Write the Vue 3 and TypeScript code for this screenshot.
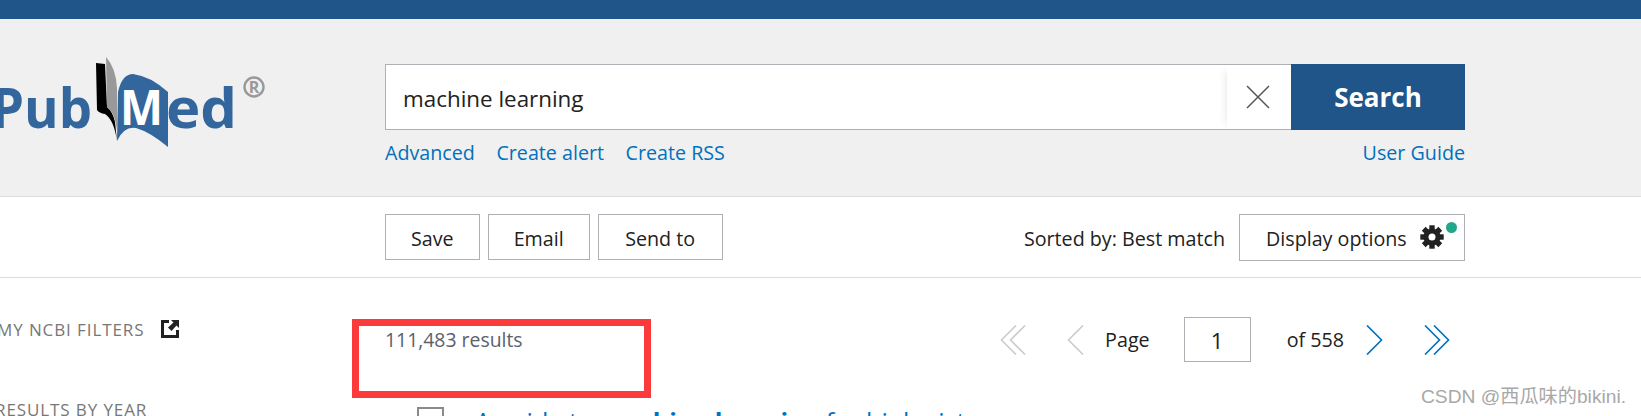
<script setup lang="ts">
const actions: string[] = ['Save', 'Email', 'Send to']
const links: string[] = ['Advanced', 'Create alert', 'Create RSS']
</script>

<template>
  <div class="page">
    <div class="topbar"></div>
    <header class="header">
      <svg class="logo" width="385" height="176" viewBox="0 19 385 176">
        <text class="logo-word" x="-9" y="128" textLength="101" lengthAdjust="spacingAndGlyphs">Pub</text>
        <path fill="#000" d="M96 63 L105 64 L107 107 Q113 112 115 122 L117 141 Q114 120 105 114 Q99 113 97 110 Z" />
        <path fill="#999" d="M106 57 Q116 68 117 88 L117 130 Q115 113 107 107 Z" />
        <path fill="#33669c" d="M118 92 Q122 74 133 74 Q150 76 168 92 L168 147 Q150 132 136 128 Q124 126 117 141 Z" />
        <text class="logo-m" x="120" y="125" textLength="43" lengthAdjust="spacingAndGlyphs">M</text>
        <text class="logo-word" x="166" y="128" textLength="71" lengthAdjust="spacingAndGlyphs">ed</text>
        <circle cx="254" cy="87" r="9.5" fill="none" stroke="#999" stroke-width="2.4" />
        <text class="logo-r" x="254" y="93">R</text>
      </svg>
      <div class="search-col">
        <div class="search-row">
          <div class="search-input">
            <span class="query">machine learning</span>
            <span class="clear">
              <svg width="24" height="24" viewBox="0 0 24 24">
                <path d="M1 1 L23 23 M23 1 L1 23" stroke="#555" stroke-width="1.5" fill="none" />
              </svg>
            </span>
          </div>
          <div class="search-btn">Search</div>
        </div>
        <div class="search-links">
          <a v-for="link in links" :key="link" class="link">{{ link }}</a>
          <a class="link guide">User Guide</a>
        </div>
      </div>
    </header>

    <section class="toolbar">
      <div class="actions">
        <div v-for="action in actions" :key="action" class="btn">{{ action }}</div>
      </div>
      <div class="sort">
        <span>Sorted by: Best match</span>
        <div class="display">
          <span>Display options</span>
          <svg width="24" height="24" viewBox="0 0 24 24">
            <g fill="#212121">
              <circle cx="12" cy="12" r="8.6" />
              <rect v-for="a in [0, 45, 90, 135]" :key="a" x="9.3" y="0.3" width="5.4" height="23.4" :transform="`rotate(${a} 12 12)`" />
              <circle cx="12" cy="12" r="3.5" fill="#fff" />
            </g>
          </svg>
          <i class="dot"></i>
        </div>
      </div>
    </section>

    <section class="content">
      <aside class="sidebar">
        <div class="side-title filters">
          <span>MY NCBI FILTERS</span>
          <svg width="18" height="18" viewBox="0 0 18 18">
            <path fill="#212121" d="M0 0 H8 V3 H3 V15 H15 V10 H18 V18 H0 Z" />
            <path fill="#212121" d="M10 0 H18 V8 L15.5 5.5 L10.5 11 L7 7.5 L12.5 2.5 Z" />
          </svg>
        </div>
        <div class="side-title year">RESULTS BY YEAR</div>
      </aside>
      <div class="main">
        <div class="result-bar">
          <span class="count">111,483 results</span>
          <nav class="pager">
            <svg class="first" width="26" height="30" viewBox="0 0 26 30">
              <path d="M16 .5 L1.5 15 L16 29.5 M25 .5 L10.5 15 L25 29.5" stroke="#ccc" stroke-width="1.6" fill="none" />
            </svg>
            <svg class="prev" width="17" height="30" viewBox="0 0 17 30">
              <path d="M16 .5 L1.5 15 L16 29.5" stroke="#ccc" stroke-width="1.6" fill="none" />
            </svg>
            <span class="page-label">Page</span>
            <div class="page-box">1</div>
            <span class="page-of">of 558</span>
            <svg class="next" width="17" height="30" viewBox="0 0 17 30">
              <path d="M1 .5 L15.5 15 L1 29.5" stroke="#0071bc" stroke-width="1.6" fill="none" />
            </svg>
            <svg class="last" width="26" height="30" viewBox="0 0 26 30">
              <path d="M1 .5 L15.5 15 L1 29.5 M10 .5 L24.5 15 L10 29.5" stroke="#0071bc" stroke-width="1.6" fill="none" />
            </svg>
          </nav>
        </div>
        <article class="article">
          <span class="check"></span>
          <a class="title">A guide to <b>machine learning</b> for biologists</a>
        </article>
      </div>
    </section>

    <div class="highlight"></div>
    <div class="watermark">CSDN @西瓜味的bikini.</div>
  </div>
</template>

<style>
html, body { margin: 0; overflow: hidden; background: #fff; }
</style>

<style scoped>
.page {
  position: relative;
  height: 416px;
  overflow: hidden;
  font-family: "Open Sans", "Noto Sans", sans-serif;
  font-size: 19.7px;
  color: #212121;
  background: #fff;
}
.topbar { height: 19px; background: #20558a; }
.header {
  height: 178px;
  box-sizing: border-box;
  display: flex;
  background: #f0f0f0;
  border-bottom: 1px solid #dcdcdc;
  padding-right: 176px;
}
.logo { flex: none; display: block; }
.logo-word { font: 700 56px "Open Sans", sans-serif; fill: #33669c; }
.logo-m { font: 700 48px "Open Sans", sans-serif; fill: #fff; }
.logo-r { font: 700 16px "Open Sans", sans-serif; fill: #999; text-anchor: middle; }
.search-col { flex: 1; padding-top: 45px; }
.search-row { display: flex; height: 66px; }
.search-input {
  flex: 1;
  display: flex;
  justify-content: space-between;
  box-sizing: border-box;
  background: #fff;
  border: 1px solid #aeb0b5;
  border-right: 0;
  align-items: stretch;
}
.query { align-self: center; padding: 2px 0 0 17px; font-size: 22.4px; }
.clear {
  width: 64px;
  box-sizing: border-box;
  padding-right: 3px;
  display: flex;
  align-items: center;
  justify-content: center;
  box-shadow: -6px 0 8px -6px rgba(0, 0, 0, .12);
}
.search-btn {
  width: 174px;
  display: flex;
  align-items: center;
  justify-content: center;
  background: #20558a;
  color: #fff;
  font-size: 26px;
  font-weight: 700;
}
.search-links { display: flex; gap: 21.5px; margin-top: 9px; line-height: 28px; }
.link { color: #0071bc; }
.guide { margin-left: auto; }
.toolbar {
  height: 81px;
  box-sizing: border-box;
  display: flex;
  align-items: center;
  justify-content: space-between;
  padding: 0 176px 0 385px;
  border-bottom: 1px solid #dcdcdc;
}
.actions { display: flex; gap: 8px; }
.btn {
  height: 46px;
  box-sizing: border-box;
  display: flex;
  align-items: center;
  padding: 2px 25px 0;
  border: 1px solid #aeb0b5;
}
.btn:last-child { padding: 2px 26.5px 0; }
.sort { display: flex; align-items: center; gap: 14px; }
.sort > span { padding-top: 2px; }
.display {
  position: relative;
  width: 226px;
  height: 47px;
  box-sizing: border-box;
  display: flex;
  align-items: center;
  gap: 13px;
  padding-left: 26px;
  border: 1px solid #aeb0b5;
}
.display > span { padding-top: 2px; }
.dot {
  position: absolute;
  top: 7px;
  right: 7px;
  width: 11px;
  height: 11px;
  border-radius: 50%;
  background: #20a88c;
}
.content { display: flex; }
.sidebar { width: 385px; flex: none; padding-top: 40px; }
.side-title {
  color: #777;
  font-size: 17px;
  letter-spacing: .9px;
  margin-left: -3px;
}
.filters { display: flex; align-items: center; gap: 17px; height: 22px; }
.year { margin-top: 58px; margin-left: -5px; }
.main { flex: 1; padding-right: 176px; }
.result-bar {
  display: flex;
  justify-content: space-between;
  padding-top: 39px;
  height: 129px;
  box-sizing: border-box;
}
.count { color: #5b616b; line-height: 24px; margin-top: 11px; font-size: 19.4px; }
.pager { display: flex; align-items: center; height: 45px; padding-right: 15px; }
.first { margin-right: 41px; }
.prev { margin-right: 21px; }
.page-box {
  width: 67px;
  height: 45px;
  box-sizing: border-box;
  display: flex;
  align-items: center;
  justify-content: center;
  border: 1px solid #aeb0b5;
  margin: 0 36px 0 34px;
  font-size: 22px;
}
.next { margin-left: 22px; }
.last { margin-left: 41px; }
.article { display: flex; align-items: flex-start; padding: 0 0 0 32px; }
.check {
  flex: none;
  width: 27px;
  height: 27px;
  box-sizing: border-box;
  border: 2px solid #8a8a8a;
}
.title { margin-left: 31px; color: #0071bc; font-size: 25.2px; line-height: 28px; white-space: nowrap; }
.title b { font-weight: 700; }
.highlight {
  position: absolute;
  left: 352px;
  top: 319px;
  width: 299px;
  height: 79px;
  box-sizing: border-box;
  border: 7px solid #fb3b3b;
}
.watermark {
  position: absolute;
  right: 15px;
  top: 381px;
  font: 19.2px "Liberation Sans", "Noto Sans CJK SC", sans-serif;
  color: #a8a8a8;
}
</style>
